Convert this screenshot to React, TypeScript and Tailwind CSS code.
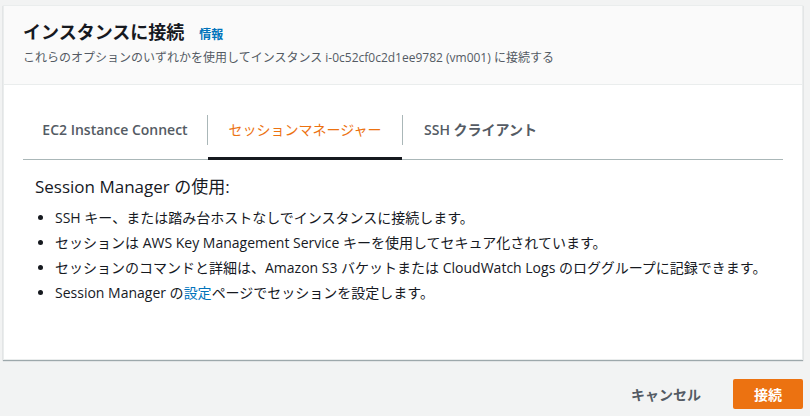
import React from "react";

const font = { fontFamily: '"Open Sans", "Noto Sans CJK JP", sans-serif' };

export default function App() {
  return (
    <div className="w-[810px] h-[416px] bg-[#f2f3f3] pt-[5px] pl-[3px] overflow-hidden" style={font}>
      <div className="w-[800px] bg-white border border-[#eaeded] shadow-[0_1px_1px_0_rgba(0,28,36,0.35)]">
        <div className="bg-[#fafafa] border-b border-[#eaeded] pl-[19px] pt-[14px] pb-[17px]">
          <div className="flex items-baseline h-[24px]">
            <h2 className="text-[18px] leading-[24px] font-bold text-[#16191f]">インスタンスに接続</h2>
            <a className="ml-[15px] text-[12px] font-bold text-[#0073bb]">情報</a>
          </div>
          <p className="mt-[5px] text-[12px] leading-[18px] text-[#545b64]">
            これらのオプションのいずれかを使用してインスタンス i-0c52cf0c2d1ee9782 (vm001) に接続する
          </p>
        </div>
        <div className="px-[19px] pt-[20px] pb-[56px]">
          <div className="flex items-start border-b border-[#aab7b8]">
            <div className="w-[184px] -mb-px pt-[15px] pb-[20px] text-center text-[14px] leading-[20px] font-semibold text-[#545b64]">
              EC2 Instance Connect
            </div>
            <span className="mt-[10px] w-px h-[30px] bg-[#aab7b8]" />
            <div className="w-[194px] -mb-px pt-[15px] pb-[17px] border-b-[3px] border-[#16191f] text-center text-[14px] leading-[20px] text-[#ec7211]">
              セッションマネージャー
            </div>
            <span className="mt-[10px] w-px h-[30px] bg-[#aab7b8]" />
            <div className="-mb-px pl-[21px] pr-[20px] pt-[15px] pb-[20px] text-[14px] leading-[20px] font-semibold text-[#545b64]">
              SSH クライアント
            </div>
          </div>
          <div className="pl-[12px] pt-[15px]">
            <h3 className="text-[17px] leading-[24px] text-[#16191f]">Session Manager の使用:</h3>
            <ul className="mt-[9px] list-disc pl-[20px] text-[14px] leading-[20px] text-[#16191f] flex flex-col gap-[5px]">
              <li>SSH キー、または踏み台ホストなしでインスタンスに接続します。</li>
              <li>セッションは AWS Key Management Service キーを使用してセキュア化されています。</li>
              <li>セッションのコマンドと詳細は、Amazon S3 バケットまたは CloudWatch Logs のロググループに記録できます。</li>
              <li>
                Session Manager の<a className="text-[#0073bb]">設定</a>ページでセッションを設定します。
              </li>
            </ul>
          </div>
        </div>
      </div>
      <div className="w-[800px] flex justify-end items-center gap-[12px] mt-[19px]">
        <button className="px-[20px] h-[30px] text-[14px] font-bold text-[#545b64]">キャンセル</button>
        <button className="w-[70px] h-[30px] rounded-[2px] bg-[#ec7211] text-[14px] font-bold text-white">接続</button>
      </div>
    </div>
  );
}
